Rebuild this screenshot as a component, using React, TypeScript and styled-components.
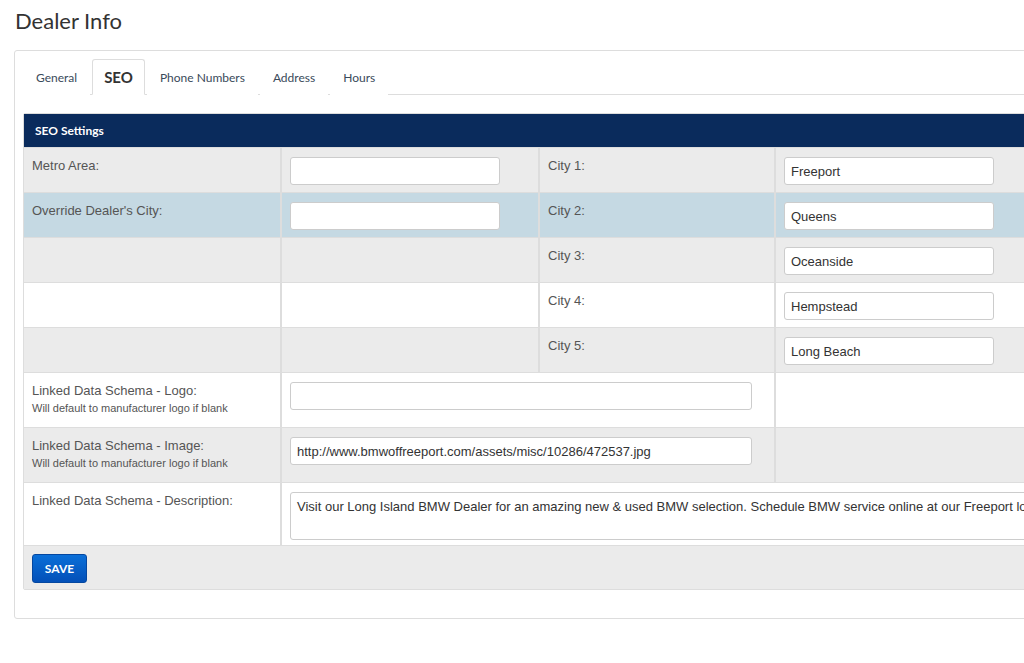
import React from "react";
import styled, { createGlobalStyle } from "styled-components";

const Global = createGlobalStyle`
  html, body { margin: 0; padding: 0; background: #fff; overflow: hidden; }
  body { width: 1024px; height: 663px; }
`;

const Page = styled.div`
  padding: 6px 0 0 14px;
  width: 1100px;
`;
const Title = styled.h1`
  font-family: Lato, sans-serif;
  font-weight: 400;
  font-size: 22px;
  color: #333;
  margin: 0 0 14px 1px;
  line-height: 30px;
`;
const Panel = styled.div`
  border: 1px solid #ddd;
  border-radius: 3px;
  padding: 8px 8px 28px 8px;
  width: 1060px;
`;
const Tabs = styled.div`
  display: flex;
  border-bottom: 1px solid #ddd;
  height: 35px;
  margin-bottom: 18px;
  font-family: Lato, sans-serif;
`;
const Tab = styled.div<{ $active?: boolean }>`
  padding: 0 ${(p) => (p.$active ? 11 : 12)}px;
  display: flex;
  align-items: center;
  font-size: ${(p) => (p.$active ? 15 : 12)}px;
  font-weight: ${(p) => (p.$active ? 700 : 400)};
  color: ${(p) => (p.$active ? "#333" : "#3a4a5a")};
  border: 1px solid ${(p) => (p.$active ? "#ddd" : "transparent")};
  border-bottom-color: ${(p) => (p.$active ? "#fff" : "transparent")};
  border-radius: 3px 3px 0 0;
  margin-bottom: -1px;
  margin-right: 2px;
  background: #fff;
`;
const Table = styled.div`
  display: grid;
  grid-template-columns: 258px 258px 236px 300px;
  font-family: "Liberation Sans", Arial, sans-serif;
  font-size: 13px;
  color: #555;
  border: 1px solid #ddd;
  border-radius: 2px;
`;
const Header = styled.div`
  grid-column: 1 / -1;
  background: #0a2b5c;
  color: #fff;
  font-family: Lato, sans-serif;
  font-weight: 700;
  font-size: 12px;
  height: 33px;
  display: flex;
  align-items: center;
  padding-left: 11px;
`;
const Cell = styled.div<{ $bg: string; $h: number; $span?: string; $last?: boolean }>`
  background: ${(p) => p.$bg};
  height: ${(p) => p.$h}px;
  grid-column: ${(p) => p.$span || "auto"};
  border-top: 1px solid #ddd;
  border-right: ${(p) => (p.$last ? "none" : "2px solid #ddd")};
  box-sizing: border-box;
  padding: 9px 8px;
`;
const Label = styled.div`
  line-height: 18px;
`;
const Hint = styled.div`
  font-size: 11px;
  line-height: 16px;
`;
const Input = styled.div<{ $w: number; $h?: number }>`
  width: ${(p) => p.$w}px;
  height: ${(p) => p.$h || 28}px;
  box-sizing: border-box;
  border: 1px solid #ccc;
  border-radius: 3px;
  background: #fff;
  padding: 0 6px;
  display: flex;
  align-items: ${(p) => (p.$h ? "flex-start" : "center")};
  padding-top: ${(p) => (p.$h ? 6 : 0)}px;
  font-size: 13px;
  color: #333;
  white-space: nowrap;
  overflow: hidden;
`;
const SaveRow = styled.div`
  grid-column: 1 / -1;
  background: #ebebeb;
  border-top: 1px solid #ddd;
  height: 44px;
  padding: 8px;
  box-sizing: border-box;
`;
const Save = styled.button`
  background: linear-gradient(#0a6fd8, #0350b8);
  border: 1px solid #0447a0;
  border-radius: 3px;
  color: #fff;
  font-family: Lato, sans-serif;
  font-weight: 700;
  font-size: 12px;
  height: 29px;
  width: 55px;
  padding: 0;
`;

const G = "#ebebeb", W = "#fff", B = "#c5d9e3";
const cities = ["Freeport", "Queens", "Oceanside", "Hempstead", "Long Beach"];
const left: [string, string][] = [["Metro Area:", G], ["Override Dealer's City:", B], ["", G], ["", W], ["", G]];

export default function App() {
  return (
    <>
      <Global />
      <Page>
        <Title>Dealer Info</Title>
        <Panel>
          <Tabs>
            <Tab>General</Tab>
            <Tab $active>SEO</Tab>
            <Tab>Phone Numbers</Tab>
            <Tab>Address</Tab>
            <Tab>Hours</Tab>
          </Tabs>
          <Table>
            <Header>SEO Settings</Header>
            {left.map(([l, bg], i) => (
              <React.Fragment key={i}>
                <Cell $bg={bg} $h={45}><Label>{l}</Label></Cell>
                <Cell $bg={bg} $h={45}>{i < 2 && <Input $w={210} />}</Cell>
                <Cell $bg={bg} $h={45}><Label>City {i + 1}:</Label></Cell>
                <Cell $bg={bg} $h={45} $last><Input $w={210}>{cities[i]}</Input></Cell>
              </React.Fragment>
            ))}
            <Cell $bg={W} $h={55}><Label>Linked Data Schema - Logo:</Label><Hint>Will default to manufacturer logo if blank</Hint></Cell>
            <Cell $bg={W} $h={55} $span="span 2"><Input $w={462} /></Cell>
            <Cell $bg={W} $h={55} $last />
            <Cell $bg={G} $h={55}><Label>Linked Data Schema - Image:</Label><Hint>Will default to manufacturer logo if blank</Hint></Cell>
            <Cell $bg={G} $h={55} $span="span 2"><Input $w={462}>http://www.bmwoffreeport.com/assets/misc/10286/472537.jpg</Input></Cell>
            <Cell $bg={G} $h={55} $last />
            <Cell $bg={W} $h={63}><Label>Linked Data Schema - Description:</Label></Cell>
            <Cell $bg={W} $h={63} $span="span 3" $last>
              <Input $w={760} $h={48}>Visit our Long Island BMW Dealer for an amazing new &amp; used BMW selection. Schedule BMW service online at our Freeport location today.</Input>
            </Cell>
            <SaveRow><Save>SAVE</Save></SaveRow>
          </Table>
        </Panel>
      </Page>
    </>
  );
}
